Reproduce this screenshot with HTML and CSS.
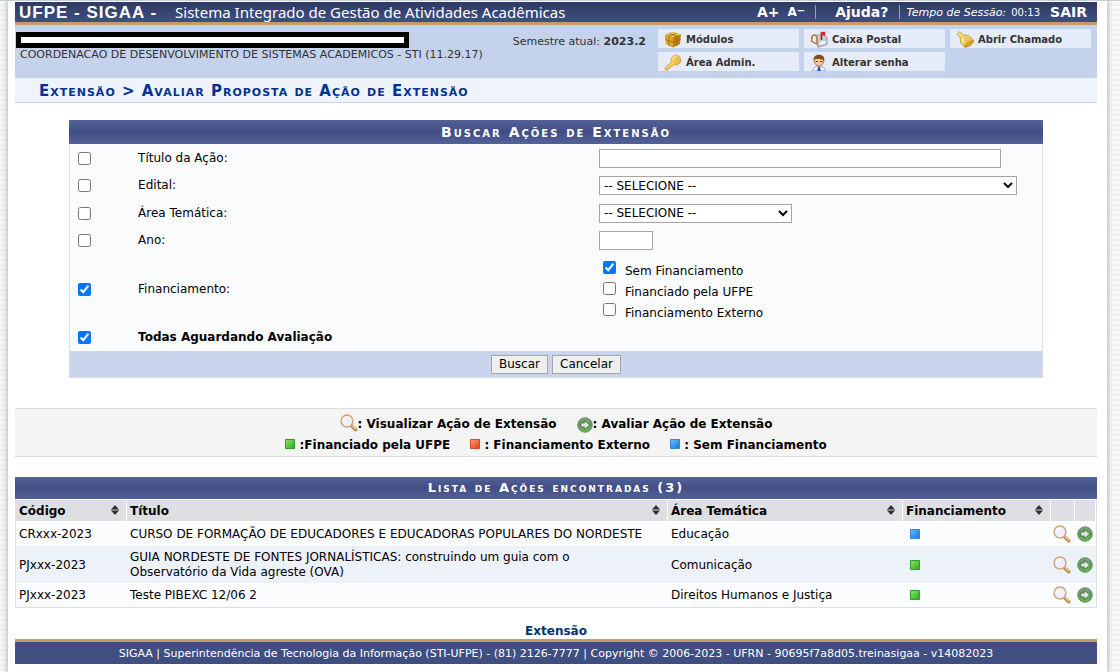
FILE: index.html
```html
<!DOCTYPE html>
<html lang="pt-BR">
<head>
<meta charset="utf-8">
<title>SIGAA - Avaliar Proposta de Ação de Extensão</title>
<link rel="stylesheet" href="styles.css">
</head>
<body>
<svg class="defs" width="0" height="0" aria-hidden="true">
  <defs>
    <linearGradient id="gGreen" x1="0" y1="0" x2="1" y2="1"><stop offset="0" stop-color="#8be466"/><stop offset="1" stop-color="#2bad1b"/></linearGradient>
    <linearGradient id="gRed" x1="0" y1="0" x2="1" y2="1"><stop offset="0" stop-color="#ff9a78"/><stop offset="1" stop-color="#e83a12"/></linearGradient>
    <linearGradient id="gBlue" x1="0" y1="0" x2="1" y2="1"><stop offset="0" stop-color="#6cc0ff"/><stop offset="1" stop-color="#0c74e0"/></linearGradient>
    <linearGradient id="gBall" x1="0" y1="0" x2="0" y2="1"><stop offset="0" stop-color="#86a888"/><stop offset=".5" stop-color="#5c9a58"/><stop offset="1" stop-color="#6cc04a"/></linearGradient>
    <linearGradient id="gGold" x1="0" y1="0" x2="1" y2="1"><stop offset="0" stop-color="#ffe98a"/><stop offset="1" stop-color="#e3a92c"/></linearGradient>
    <symbol id="lens" viewBox="0 0 18 18">
      <path d="M11 11.500l4.800 4.300" stroke="#bd8547" stroke-width="3.200" stroke-linecap="round"/>
      <path d="M11.800 11.500l3.800 3.400" stroke="#ecc28c" stroke-width="1.500" stroke-linecap="round"/>
      <circle cx="7" cy="7" r="5.900" fill="#eef1f8" stroke="#cfa67c" stroke-width="1.500"/>
      <path d="M3.200 7A3.800 3.800 0 0 1 7 3.200" fill="none" stroke="#fff" stroke-width="1.200"/>
    </symbol>
    <symbol id="go" viewBox="0 0 16 16">
      <circle cx="8" cy="8" r="7.300" fill="url(#gBall)" stroke="#55805a" stroke-width=".8"/>
      <path d="M3.700 6h3.600V3.200L12.800 8l-5.500 4.800V10H3.700z" fill="#dfe6dd" stroke="#3f6843" stroke-width=".8"/>
    </symbol>
    <symbol id="sq-green" viewBox="0 0 10 10"><path d="M.5.5h9v9h-9z" fill="url(#gGreen)" stroke="#329a28"/></symbol>
    <symbol id="sq-red" viewBox="0 0 10 10"><path d="M.5.5h9v9h-9z" fill="url(#gRed)" stroke="#cc4a2a"/></symbol>
    <symbol id="sq-blue" viewBox="0 0 10 10"><path d="M.5.5h9v9h-9z" fill="url(#gBlue)" stroke="#3a83cc"/></symbol>
    <symbol id="sort" viewBox="0 0 8 10"><path d="M4 0l4 4.500H0zM4 10l4-4.500H0z" fill="#333"/><path d="M0 5h8" stroke="#777" stroke-width="1"/></symbol>
    <symbol id="box" viewBox="0 0 18 17">
      <path d="M1 3.500L9 1l8 2.500-1 9.500-7 3.500L2 13z" fill="#b97f12"/>
      <path d="M1 3.500L9 1l8 2.500L9 6z" fill="#efcf62"/>
      <path d="M1 3.500L9 6v10.500L2 13z" fill="#dba92f"/>
      <path d="M4.800 2.300l8 2.600v9.800M12.800 2.300l-8 2.600v9.600M1.500 8.500L9 11.300l7.500-2.800" fill="none" stroke="#9a6a14" stroke-width=".8"/>
    </symbol>
    <symbol id="key" viewBox="0 0 18 17">
      <path d="M7.300 8L1.200 13.600 1 16h3l.3-1.700 1.900-.2.4-1.800 1.900-.2 1.800-1.700z" fill="url(#gGold)" stroke="#d2a04a" stroke-width=".8"/>
      <circle cx="12" cy="6" r="5" fill="url(#gGold)" stroke="#d2a04a" stroke-width=".8"/>
      <path d="M7.800 8.500l1.800 1.800" stroke="#f8d468" stroke-width="2.500"/>
      <circle cx="13.500" cy="4.500" r="1.300" fill="#fff" stroke="#b58224" stroke-width=".6"/>
    </symbol>
    <symbol id="mail" viewBox="0 0 18 17">
      <path d="M1 7c0-2.400 1.600-3.800 3.400-3.800S7.600 4.700 7.600 7v7L1 10.800z" fill="#b5742f"/>
      <path d="M2.500 7c0-1.200.8-2.200 1.900-2.200S6.200 5.800 6.200 7v4.800l-3.700-1.600z" fill="#e9e9e9"/>
      <path d="M5 4l8.500.2c2.200.1 3.500 1.700 3.500 3.800v5.500l-9.200 2.700V8C7.800 6 6.800 4.500 5 4z" fill="#c9ccd2" stroke="#868a92" stroke-width=".8"/>
      <path d="M9.500 11l6-1.200v2.700l-6 1.600z" fill="#f4f4f4"/>
      <path d="M11.500 9V1" stroke="#b40c14" stroke-width="1.500"/><path d="M10.900.8h4.300v3.700h-4.300z" fill="#e2222c"/>
    </symbol>
    <symbol id="user" viewBox="0 0 18 17">
      <path d="M2.500 17c.4-3 2.400-5 6.500-5s6 2 6.500 5z" fill="#e8eefb" stroke="#8a98bb" stroke-width=".8"/>
      <path d="M8.200 12.500h1.700l1 4.500H7.200z" fill="#3458b5"/>
      <circle cx="9" cy="7" r="4.800" fill="#f5c99e" stroke="#a9683b" stroke-width=".8"/>
      <path d="M3.700 7C3 3 5.300.8 9 .8S15 3 14.300 7C12.500 4.500 9 5.800 6.500 4.800 5 5 4.300 5.700 3.700 7z" fill="#8c4a1c"/>
      <path d="M5.500 7.500h2.600M10 7.500h2.600" stroke="#6a4a3a" stroke-width="1"/>
    </symbol>
    <symbol id="bell" viewBox="0 0 18 17">
      <path d="M1 3.200L3.800.8l4.400 3.600c4.300-.6 7 1.600 9.400 5.600L9 16.200C6 14 3.600 11.500 4.600 7.200z" fill="url(#gGold)" stroke="#c08d20" stroke-width=".8"/>
      <path d="M9 16.200c.4-3 4.700-6.400 8.600-6.200-.4 3-4.600 6.200-8.600 6.200z" fill="#e0a51c" stroke="#a87614" stroke-width=".6"/>
      <path d="M6.800 7c-.8 2-.3 3.800 1 5.400" fill="none" stroke="#fff6c4" stroke-width="1.600"/>
    </symbol>
  </defs>
</svg>
<div class="page">
  <header>
    <div class="topbar">
      <strong class="brand">UFPE - SIGAA -</strong>
      <span class="system">Sistema Integrado de Gestão de Atividades Acadêmicas</span>
      <div class="tools">
        <button type="button" class="font-up">A+</button>
        <button type="button" class="font-down">A<sup>−</sup></button>
        <a class="help" href="#">Ajuda?</a>
        <span class="session"><em>Tempo de Sessão:</em> 00:13</span>
        <a class="exit" href="#">SAIR</a>
      </div>
    </div>
    <div class="userbar">
      <div class="unit">
        <div class="redacted"></div>
        <div>COORDENACAO DE DESENVOLVIMENTO DE SISTEMAS ACADEMICOS - STI (11.29.17)</div>
      </div>
      <div class="term">Semestre atual: <strong>2023.2</strong></div>
      <nav class="shortcuts">
        <a href="#"><svg><use href="#box"/></svg>Módulos</a>
        <a href="#"><svg><use href="#mail"/></svg>Caixa Postal</a>
        <a href="#"><svg><use href="#bell"/></svg>Abrir Chamado</a>
        <a href="#"><svg><use href="#key"/></svg>Área Admin.</a>
        <a href="#"><svg><use href="#user"/></svg>Alterar senha</a>
      </nav>
    </div>
    <h1 class="crumb">Extensão &gt; Avaliar Proposta de Ação de Extensão</h1>
  </header>
  <main>
    <form class="search">
      <h2 class="title">Buscar Ações de Extensão</h2>
      <div class="fields">
        <div class="row">
          <input type="checkbox" id="c1" aria-label="Filtrar por título">
          <label for="titulo">Título da Ação:</label>
          <div><input type="text" id="titulo" class="wide"></div>
        </div>
        <div class="row">
          <input type="checkbox" id="c2" aria-label="Filtrar por edital">
          <label for="edital">Edital:</label>
          <div><select id="edital" class="wider"><option>-- SELECIONE --</option></select></div>
        </div>
        <div class="row tall">
          <input type="checkbox" id="c3" aria-label="Filtrar por área">
          <label for="area">Área Temática:</label>
          <div><select id="area" class="medium"><option>-- SELECIONE --</option></select></div>
        </div>
        <div class="row">
          <input type="checkbox" id="c4" aria-label="Filtrar por ano">
          <label for="ano">Ano:</label>
          <div><input type="text" id="ano" class="short"></div>
        </div>
        <div class="row">
          <input type="checkbox" id="c5" checked>
          <label for="c5">Financiamento:</label>
          <div class="options">
            <label><input type="checkbox" checked><span>Sem Financiamento</span></label>
            <label><input type="checkbox"><span>Financiado pela UFPE</span></label>
            <label><input type="checkbox"><span>Financiamento Externo</span></label>
          </div>
        </div>
        <div class="row">
          <input type="checkbox" id="c6" checked>
          <label for="c6"><strong>Todas Aguardando Avaliação</strong></label>
        </div>
      </div>
      <div class="actions">
        <button type="button">Buscar</button>
        <button type="button">Cancelar</button>
      </div>
    </form>

    <div class="legend">
      <div class="line">
        <span><svg class="lens"><use href="#lens"/></svg>: Visualizar Ação de Extensão</span>
        <span><svg class="go"><use href="#go"/></svg>: Avaliar Ação de Extensão</span>
      </div>
      <div class="line">
        <span><svg class="sq"><use href="#sq-green"/></svg> :Financiado pela UFPE</span>
        <span><svg class="sq"><use href="#sq-red"/></svg> : Financiamento Externo</span>
        <span><svg class="sq"><use href="#sq-blue"/></svg> : Sem Financiamento</span>
      </div>
    </div>

    <section class="list">
      <h2 class="title compact">Lista de Ações encontradas (3)</h2>
      <table>
        <colgroup><col class="code"><col><col class="theme"><col class="fund"><col class="view"><col class="eval"></colgroup>
        <thead>
          <tr>
            <th><div>Código<svg><use href="#sort"/></svg></div></th>
            <th><div>Título<svg><use href="#sort"/></svg></div></th>
            <th><div>Área Temática<svg><use href="#sort"/></svg></div></th>
            <th><div>Financiamento<svg><use href="#sort"/></svg></div></th>
            <th></th><th></th>
          </tr>
        </thead>
        <tbody>
          <tr>
            <td>CRxxx-2023</td><td>CURSO DE FORMAÇÃO DE EDUCADORES E EDUCADORAS POPULARES DO NORDESTE</td><td>Educação</td>
            <td class="mark"><svg class="sq"><use href="#sq-blue"/></svg></td>
            <td class="icon"><a href="#" aria-label="Visualizar"><svg class="lens"><use href="#lens"/></svg></a></td>
            <td class="icon"><a href="#" aria-label="Avaliar"><svg class="go"><use href="#go"/></svg></a></td>
          </tr>
          <tr class="alt">
            <td>PJxxx-2023</td><td>GUIA NORDESTE DE FONTES JORNALÍSTICAS: construindo um guia com o<br>Observatório da Vida agreste (OVA)</td><td>Comunicação</td>
            <td class="mark"><svg class="sq"><use href="#sq-green"/></svg></td>
            <td class="icon"><a href="#" aria-label="Visualizar"><svg class="lens"><use href="#lens"/></svg></a></td>
            <td class="icon"><a href="#" aria-label="Avaliar"><svg class="go"><use href="#go"/></svg></a></td>
          </tr>
          <tr>
            <td>PJxxx-2023</td><td>Teste PIBEXC 12/06 2</td><td>Direitos Humanos e Justiça</td>
            <td class="mark"><svg class="sq"><use href="#sq-green"/></svg></td>
            <td class="icon"><a href="#" aria-label="Visualizar"><svg class="lens"><use href="#lens"/></svg></a></td>
            <td class="icon"><a href="#" aria-label="Avaliar"><svg class="go"><use href="#go"/></svg></a></td>
          </tr>
        </tbody>
      </table>
    </section>
    <div class="back"><a href="#">Extensão</a></div>
  </main>
  <footer>SIGAA | Superintendência de Tecnologia da Informação (STI-UFPE) - (81) 2126-7777 | Copyright © 2006-2023 - UFRN - 90695f7a8d05.treinasigaa - v14082023</footer>
</div>
</body>
</html>
```
FILE: styles.css
```css
* { box-sizing: border-box; }
html { background: #f6f6f6; }
body {
  margin: 0;
  min-height: 100vh;
  display: flex;
  font: 12px/15px Verdana, "DejaVu Sans", sans-serif;
  color: #000;
  border-top: 1px solid #c3cfd6;
  background: repeating-linear-gradient(#f8f8f8 0 3px, #f1f1f1 3px 5px);
}
.defs { position: absolute; }
a { color: inherit; text-decoration: none; }
button, input, select { font: inherit; color: inherit; }
.page {
  flex: 1;
  min-width: 0;
  margin: 0 13px 0 8px;
  padding: 1px 10px 8px 7px;
  background: #fff;
  box-shadow: 0 0 5px 1px #b5b5b5;
}

.topbar {
  display: flex;
  align-items: center;
  height: 23px;
  padding: 0 10px 0 4px;
  color: #fff;
  background: linear-gradient(#2e3a63, #404e82);
  border-bottom: 3px solid #c49c68;
  white-space: nowrap;
}
.brand { padding-top: 1px; font: bold 17px/20px "Liberation Sans", Arial, sans-serif; letter-spacing: 1px; }
.system { margin-left: 18px; font: 15px/20px "Noto Sans", sans-serif; }
.tools { display: flex; align-items: center; margin-left: auto; line-height: 14px; }
.tools button { padding: 0; border: 0; background: none; font-weight: bold; color: #fff; }
.tools .font-up { font-size: 14px; }
.tools .font-down { margin-left: 8px; padding-right: 10px; border-right: 1px solid #c49c68; }
.tools sup { font-size: 10px; line-height: 0; vertical-align: 2px; }
.help { padding: 0 11px 0 19px; border-right: 1px solid #c49c68; font-size: 14px; font-weight: bold; }
.session { margin-left: 6px; padding-top: 1px; font-size: 10px; }
.session em { margin-right: 2px; font-size: 11px; }
.exit { margin-left: 10px; font-size: 14px; font-weight: bold; }

.userbar {
  display: flex;
  min-height: 53px;
  padding: 4px 6px 6px 1px;
  background: #c4d2eb;
  color: #333;
  white-space: nowrap;
}
.unit { font-size: 11px; padding-top: 3px; }
.unit div + div { padding-left: 4px; line-height: 14px; }
.redacted { width: 393px; height: 16px; border: 5px solid #000; background: #fff; }
.term { margin-left: auto; padding-top: 5px; font-size: 11px; }
.shortcuts {
  display: grid;
  grid-template-columns: repeat(3, 141px);
  grid-auto-rows: 19px;
  gap: 4px 5px;
  margin-left: 12px;
}
.shortcuts a {
  display: flex;
  align-items: center;
  gap: 4px;
  padding: 1px 0 0 6px;
  background: #e5ebf7;
  font-size: 10px;
  font-weight: bold;
}
.shortcuts svg { width: 18px; height: 17px; }

.crumb {
  margin: 0;
  padding: 4px 24px 1px;
  border-bottom: 1px solid #c8d5ec;
  background: #eff3fa;
  color: #003390;
  font-size: 15px;
  line-height: 19px;
  font-variant: small-caps;
  letter-spacing: 1px;
}

.title {
  margin: 0;
  color: #fff;
  background: linear-gradient(#54629a, #404e82 50%, #54629a);
  font-size: 14px;
  line-height: 24px;
  text-align: center;
  font-variant: small-caps;
  letter-spacing: 2px;
}
.compact { font-size: 13px; line-height: 22px; }

.search { width: 90%; margin: 17px auto 0; }
.fields { padding: 1px 0 0; border: solid #dedfe3; border-width: 0 1px; background: #fafbfd; }
.row {
  display: grid;
  grid-template-columns: 60px 461fr 443fr;
  align-items: center;
  min-height: 27px;
  padding-left: 8px;
}
.tall { min-height: 28px; }
input[type="checkbox"] { width: 13px; height: 13px; margin: 0; }
input[type="text"], select {
  display: block;
  max-width: 100%;
  height: 19px;
  border: 1px solid #a5a5a5;
  border-radius: 0;
  background: #fff;
}
select { padding: 0; }
.wide { width: 402px; }
.wider { width: 418px; }
.medium { width: 193px; }
.short { width: 54px; }
.options { padding: 7px 4px 0; }
.options label { display: flex; gap: 9px; height: 21px; }
.options span { padding-top: 3px; }
.actions {
  display: flex;
  justify-content: center;
  gap: 4px;
  padding: 4px 0 3px;
  border: 1px solid #d5dae6;
  border-top: 0;
  background: #c8d5ec;
}
.actions button { height: 19px; padding: 0 7px; border: 1px solid #a5a5a5; background: #efefef; line-height: 15px; }

.legend {
  margin-top: 30px;
  padding: 5px 0 0;
  min-height: 48px;
  border: solid #dcdcdc;
  border-width: 1px 0;
  background: #f4f4f4;
  font-weight: bold;
}
.line { display: flex; justify-content: center; gap: 20px; height: 21px; white-space: pre; }
.line span { display: flex; align-items: center; }
.line .lens, .line .sq { margin-bottom: 4px; }
.sq { width: 10px; height: 10px; }
.lens { width: 18px; height: 18px; }
.go { width: 16px; height: 16px; }

.list { margin-top: 20px; }
table { width: 100%; table-layout: fixed; border-spacing: 0; border: 1px solid #dedfe3; border-top: 0; }
.code { width: 111px; }
.theme { width: 235px; }
.fund { width: 148px; }
.view { width: 24px; }
.eval { width: 21px; }
th { padding: 0 4px 0 3px; height: 23px; text-align: left; background: #dedfe3; border: solid #fff; border-width: 1px 1px 1px 0; white-space: nowrap; }
th div { display: flex; align-items: center; justify-content: space-between; padding-top: 1px; }
th svg { width: 8px; height: 10px; margin: 0 3px 2px 0; }
td { height: 24px; padding: 1px 3px 0; background: #fafcfd; }
.alt td { height: 37px; background: #edf1f8; }
td svg { display: block; }
td.mark { padding: 0 0 0 7px; }
td.icon { padding: 0 2px; }

.back { margin-top: 16px; color: #003375; font-weight: bold; text-align: center; }
footer {
  padding: 4px 0 3px;
  border-top: 3px solid #c49c68;
  background: #404e82;
  color: #fff;
  font-size: 11px;
  text-align: center;
}
```
